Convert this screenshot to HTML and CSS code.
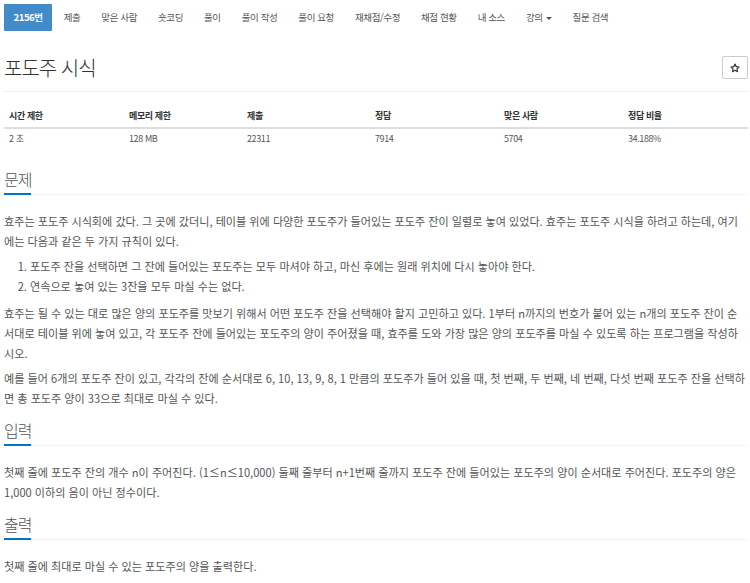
FILE: index.html
```html
<!DOCTYPE html>
<html lang="ko">
<head>
    <meta charset="UTF-8" />
    <meta name="viewport" content="width=device-width, initial-scale=1.0"/>
    <title>2156번: 포도주 시식</title>
    <link rel="stylesheet" href="styles.css">
</head>
<body>
    <div class="container">
        <ul class="problem-menu">
            <li class="active"><a href="#">2156번</a></li>
            <li><a href="#">제출</a></li>
            <li><a href="#">맞은 사람</a></li>
            <li><a href="#">숏코딩</a></li>
            <li><a href="#">풀이</a></li>
            <li><a href="#">풀이 작성</a></li>
            <li><a href="#">풀이 요청</a></li>
            <li><a href="#">재채점/수정</a></li>
            <li><a href="#">채점 현황</a></li>
            <li><a href="#">내 소스</a></li>
            <li><a href="#">강의<span class="caret"></span></a></li>
            <li><a href="#">질문 검색</a></li>
        </ul>

        <div class="page-header">
            <h1 class="problem-title">포도주 시식</h1>
            <button class="star-btn" title="즐겨찾기">
                <svg width="10" height="10" viewBox="0 0 24 24">
                    <path d="M12 2.6l2.9 6.1 6.7.9-4.9 4.6 1.3 6.6L12 17.5l-6 3.3 1.3-6.6-4.9-4.6 6.7-.9z" fill="none" stroke="#333" stroke-width="2.8" stroke-linejoin="round"/>
                </svg>
            </button>
        </div>

        <table class="problem-info">
            <thead>
                <tr>
                    <th>시간 제한</th>
                    <th>메모리 제한</th>
                    <th>제출</th>
                    <th>정답</th>
                    <th>맞은 사람</th>
                    <th>정답 비율</th>
                </tr>
            </thead>
            <tbody>
                <tr>
                    <td>2 초</td>
                    <td>128 MB</td>
                    <td>22311</td>
                    <td>7914</td>
                    <td>5704</td>
                    <td>34.188%</td>
                </tr>
            </tbody>
        </table>

        <section class="problem-section">
            <div class="headline"><h2>문제</h2></div>
            <div class="problem-text">
                <p>효주는 포도주 시식회에 갔다. 그 곳에 갔더니, 테이블 위에 다양한 포도주가 들어있는 포도주 잔이 일렬로 놓여 있었다. 효주는 포도주 시식을 하려고 하는데, 여기<br>에는 다음과 같은 두 가지 규칙이 있다.</p>
                <ol>
                    <li>포도주 잔을 선택하면 그 잔에 들어있는 포도주는 모두 마셔야 하고, 마신 후에는 원래 위치에 다시 놓아야 한다.</li>
                    <li>연속으로 놓여 있는 3잔을 모두 마실 수는 없다.</li>
                </ol>
                <p>효주는 될 수 있는 대로 많은 양의 포도주를 맛보기 위해서 어떤 포도주 잔을 선택해야 할지 고민하고 있다. 1부터 n까지의 번호가 붙어 있는 n개의 포도주 잔이 순<br>서대로 테이블 위에 놓여 있고, 각 포도주 잔에 들어있는 포도주의 양이 주어졌을 때, 효주를 도와 가장 많은 양의 포도주를 마실 수 있도록 하는 프로그램을 작성하<br>시오.</p>
                <p>예를 들어 6개의 포도주 잔이 있고, 각각의 잔에 순서대로 6, 10, 13, 9, 8, 1 만큼의 포도주가 들어 있을 때, 첫 번째, 두 번째, 네 번째, 다섯 번째 포도주 잔을 선택하<br>면 총 포도주 양이 33으로 최대로 마실 수 있다.</p>
            </div>
        </section>

        <section class="problem-section">
            <div class="headline"><h2>입력</h2></div>
            <div class="problem-text">
                <p>첫째 줄에 포도주 잔의 개수 n이 주어진다. (1≤n≤10,000) 둘째 줄부터 n+1번째 줄까지 포도주 잔에 들어있는 포도주의 양이 순서대로 주어진다. 포도주의 양은<br>1,000 이하의 음이 아닌 정수이다.</p>
            </div>
        </section>

        <section class="problem-section">
            <div class="headline"><h2>출력</h2></div>
            <div class="problem-text">
                <p>첫째 줄에 최대로 마실 수 있는 포도주의 양을 출력한다.</p>
            </div>
        </section>
    </div>
</body>
</html>
```

FILE: styles.css
```css
body {
    margin: 0;
    padding: 0;
    background-color: #fff;
    color: #555;
    font-family: "Noto Sans CJK KR", "Noto Sans", sans-serif;
    font-size: 11px;
}

.container {
    padding: 0 2px 0 4px;
}

/* 상단 메뉴 */
.problem-menu {
    display: flex;
    gap: 2px;
    list-style: none;
    margin: 0;
    padding: 4px 0 0 0;
}

.problem-menu a {
    display: block;
    height: 27px;
    line-height: 27px;
    padding: 0 9.5px;
    font-size: 9.5px;
    letter-spacing: -0.4px;
    color: #555;
    text-decoration: none;
}

.problem-menu li.active a {
    background-color: #428bca;
    color: #fff;
    font-weight: bold;
    border-radius: 1px;
}

.caret {
    display: inline-block;
    width: 0;
    height: 0;
    margin-left: 3px;
    vertical-align: middle;
    border-top: 3px solid #555;
    border-left: 3px solid transparent;
    border-right: 3px solid transparent;
}

/* 제목 */
.page-header {
    display: flex;
    justify-content: space-between;
    align-items: center;
    margin-top: 25px;
    padding-bottom: 12px;
    border-bottom: 1px solid #eee;
}

.problem-title {
    margin: 0;
    font-size: 20px;
    line-height: 23px;
    font-weight: 300;
    letter-spacing: -1px;
    color: #333;
}

.star-btn {
    width: 26px;
    height: 23px;
    padding: 0;
    display: flex;
    align-items: center;
    justify-content: center;
    background-color: #fff;
    border: 1px solid #ccc;
    border-radius: 2px;
    cursor: pointer;
}

/* 정보 표 */
.problem-info {
    width: 100%;
    border-collapse: collapse;
    margin: 12px 0 20px;
    font-size: 9px;
    letter-spacing: -0.4px;
}

.problem-info th,
.problem-info td {
    text-align: left;
    line-height: 14px;
    padding: 3px 5px;
}

.problem-info th {
    padding: 5px 5px 4px;
    color: #333;
    font-weight: bold;
    border-bottom: 2px solid #ddd;
}

.problem-info td {
    color: #555;
}

.problem-info th:nth-child(1) { width: 110px; }
.problem-info th:nth-child(2) { width: 108px; }
.problem-info th:nth-child(3) { width: 118px; }
.problem-info th:nth-child(4) { width: 119px; }
.problem-info th:nth-child(5) { width: 114px; }

/* 본문 */
.problem-section {
    margin-top: 12px;
}

.headline {
    display: flex;
    border-bottom: 1px dotted #e4e9f0;
    margin-bottom: 16px;
}

.headline h2 {
    margin: 0 0 -1px;
    padding-bottom: 4px;
    font-size: 16px;
    line-height: 20px;
    font-weight: 300;
    letter-spacing: -1px;
    color: #555;
    border-bottom: 2px solid #0076c0;
}

.problem-text {
    font-size: 11.1px;
    line-height: 20px;
}

.problem-text p {
    margin: 0 0 5px;
}

.problem-text ol {
    margin: 0 0 7px;
    padding-left: 26px;
}
```
